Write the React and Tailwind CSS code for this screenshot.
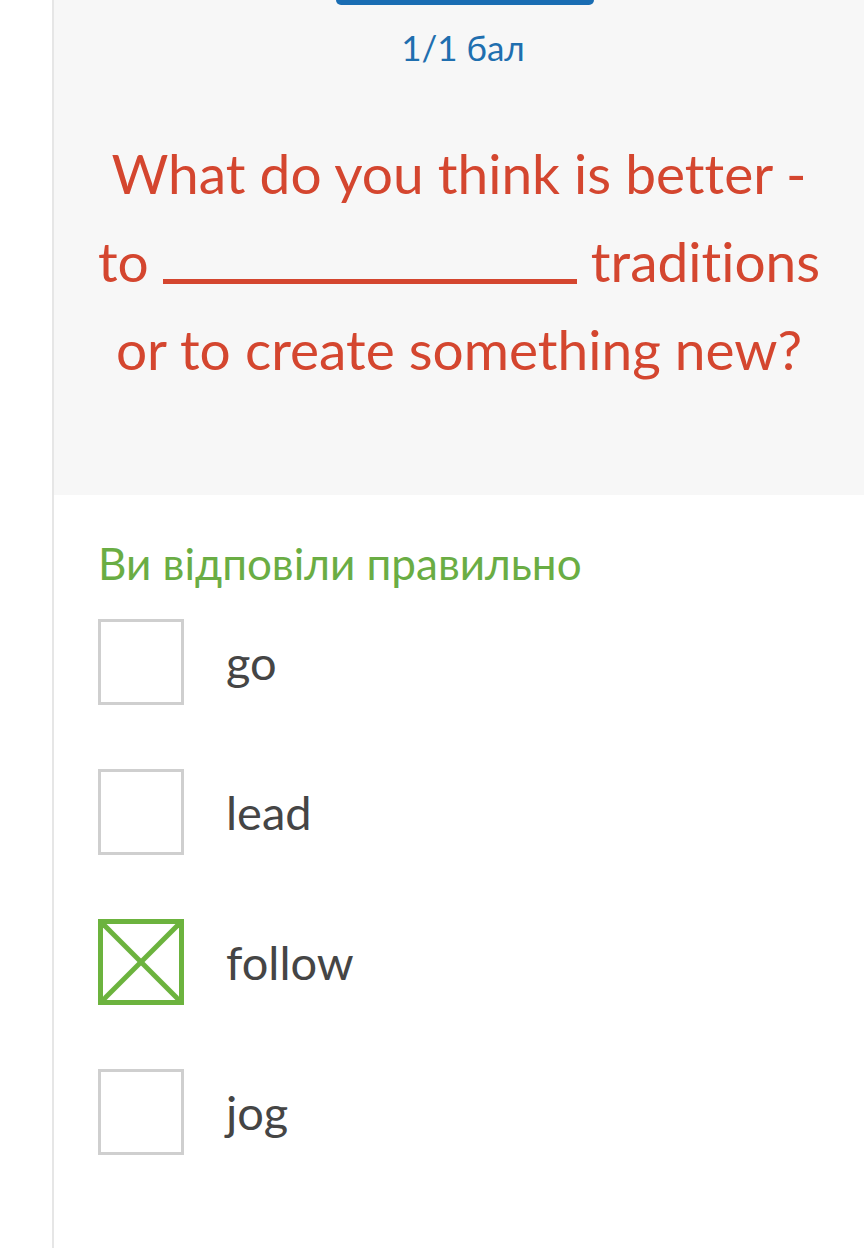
import React from 'react'

const options = [
  { id: 'go', label: 'go', checked: false },
  { id: 'lead', label: 'lead', checked: false },
  { id: 'follow', label: 'follow', checked: true },
  { id: 'jog', label: 'jog', checked: false },
]

const CheckBox = ({ checked }) => {
  if (checked) {
    return (
      <div className="relative h-[86px] w-[86px] shrink-0 border-[5px] border-[#6cb33e]">
        <svg className="absolute inset-0 h-full w-full" viewBox="0 0 76 76" preserveAspectRatio="none">
          <line x1="0" y1="0" x2="76" y2="76" stroke="#6cb33e" strokeWidth="5" />
          <line x1="76" y1="0" x2="0" y2="76" stroke="#6cb33e" strokeWidth="5" />
        </svg>
      </div>
    )
  }
  return <div className="h-[86px] w-[86px] shrink-0 border-[3px] border-[#cfcfcf] bg-white" />
}

export default function App() {
  return (
    <div className="flex min-h-[1248px] bg-white font-['Lato','Noto_Sans',sans-serif] [font-variant-ligatures:none]">
      <div className="w-[52px] shrink-0" />
      <div className="flex-1 border-l-[2px] border-[#e6e6e6]">
        <section className="flex h-[495px] flex-col items-center bg-[#f7f7f7]">
          <div className="ml-[12px] h-[5px] w-[258px] rounded-b-full bg-[#1a6db3]" />
          <p className="mt-[20px] ml-[8px] text-[35px] leading-[44px] text-[#1f6faf]">1/1 бал</p>
          <h1 className="mt-[60px] w-full px-[30px] text-center text-[55px] leading-[88px] text-[#d4462f]">
            What do you think is better -
            <br />
            to{' '}
            <span className="inline-block w-[414px] translate-y-[2px] border-b-[5px] border-[#d4462f] align-baseline" />{' '}
            traditions
            <br />
            or to create something new?
          </h1>
        </section>
        <section className="px-[44px] pt-[40px]">
          <p className="text-[44px] leading-[56px] text-[#6aad44]">Ви відповіли правильно</p>
          <ul className="mt-[28px] flex flex-col gap-[64px]">
            {options.map((o) => (
              <li key={o.id} className="flex items-center gap-[42px]">
                <CheckBox checked={o.checked} />
                <span className="text-[47px] leading-[50px] text-[#454545]">{o.label}</span>
              </li>
            ))}
          </ul>
        </section>
      </div>
    </div>
  )
}
